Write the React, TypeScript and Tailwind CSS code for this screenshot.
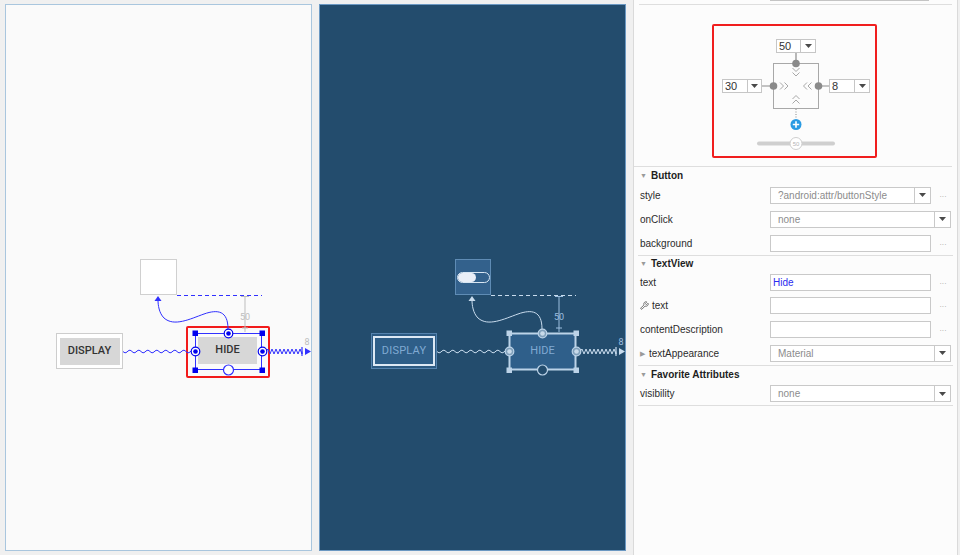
import React from 'react';
import { Wrench } from 'lucide-react';

// small helpers for the connector drawings
const wave = (x1: number, x2: number, y: number, amp: number, period: number) => {
  let d = `M${x1},${y}`;
  for (let x = x1 + 1; x <= x2; x += 1) {
    d += ` L${x},${(y + amp * Math.sin(((x - x1) / period) * 2 * Math.PI)).toFixed(2)}`;
  }
  return d;
};

const zigzag = (x1: number, x2: number, y: number, amp: number, step: number) => {
  let d = `M${x1},${y}`;
  let up = true;
  for (let x = x1 + step; x <= x2; x += step) {
    d += ` L${x},${up ? y - amp : y + amp}`;
    up = !up;
  }
  return d + ` L${x2},${y}`;
};

function DesignCanvas({ blueprint }: { blueprint?: boolean }) {
  const line = blueprint ? '#c9dcee' : '#3030ff';
  const dim = blueprint ? '#9dbfe0' : '#bdbdbd';
  const handle = blueprint ? '#bcd3e8' : '#0000ee';

  return (
    <div
      className={
        blueprint
          ? 'relative w-[307px] h-[547px] border border-[#6b98c2] bg-[#234c6d]'
          : 'relative w-[307px] h-[547px] border border-[#a9c6de] bg-[#fafafa]'
      }
    >
      {/* placeholder / switch widget */}
      {blueprint ? (
        <div className="absolute left-[135px] top-[254px] w-[36px] h-[36px] bg-[#33618c] border border-[#5f8cb5] flex items-center justify-center">
          <div className="w-[33px] h-[11px] rounded-full border border-[#d8e6f3] flex items-center">
            <div className="w-[18px] h-[9px] rounded-full bg-[#e9eef7]" />
          </div>
        </div>
      ) : (
        <div className="absolute left-[134px] top-[254px] w-[37px] h-[36px] bg-white border border-[#d0d0d0]" />
      )}

      {/* DISPLAY button */}
      {blueprint ? (
        <div className="absolute left-[51px] top-[328px] w-[66px] h-[36px] bg-[#2c5a83] border border-[#5583ae] flex items-center justify-center">
          <div className="w-[62px] h-[30px] border-2 border-[#dde9f5] bg-[#2e5e88] flex items-center justify-center font-['Roboto'] text-[11px] text-[#80aad3] tracking-[0.2px]">
            DISPLAY
          </div>
        </div>
      ) : (
        <div className="absolute left-[50px] top-[328px] w-[67px] h-[36px] bg-white border border-[#cdcdcd] flex items-center justify-center">
          <div className="w-[60px] h-[27px] bg-[#d7d7d7] flex items-center justify-center font-['Roboto'] font-medium text-[11px] text-[#333]">
            DISPLAY
          </div>
        </div>
      )}

      {/* HIDE button */}
      {blueprint ? (
        <div className="absolute left-[189px] top-[328px] w-[67px] h-[37px] bg-[#2f5f8a] flex items-center justify-center font-['Roboto'] text-[11px] text-[#80aad3]">
          HIDE
        </div>
      ) : (
        <>
          <div className="absolute left-[192px] top-[332px] w-[59px] h-[27px] bg-[#d7d7d7] flex items-center justify-center font-['Roboto'] font-medium text-[11px] text-[#333]">
            HIDE
          </div>
          <div className="absolute left-[180px] top-[321px] w-[84px] h-[52px] border-2 border-[#f21b1b] rounded-[2px]" />
        </>
      )}

      <svg className="absolute left-0 top-0" width="305" height="545">
        {/* dashed baseline from the top widget */}
        <path d="M171,290.5 H256" stroke={line} strokeWidth="1" strokeDasharray="4 3" fill="none" />
        {/* 50 margin marker */}
        <path d="M235,291.5 H243 M239,291.5 V327 M236,323 H242" stroke={dim} strokeWidth="1" fill="none" />
        <text x="239" y="315" fontSize="9" fill={dim} textAnchor="middle" fontFamily="Roboto, sans-serif">
          50
        </text>
        {/* curved top constraint */}
        <path
          d="M222,324 C222,306 212,304 198,309 C184,314 168,322 158,313 C153,308 152,300 152,295"
          stroke={line}
          strokeWidth="1"
          fill="none"
        />
        <path d="M148.5,296 L152,291 L155.5,296 Z" fill={line} />
        {/* left wave to DISPLAY */}
        <path d={wave(117, 185, 346.5, 1.3, 9)} stroke={line} strokeWidth="1" fill="none" />
        {/* right spring to parent edge */}
        <path d={zigzag(260, 296, 346.5, 2.5, 2)} stroke={line} strokeWidth="1" fill="none" />
        <path d="M296,342 V351" stroke={line} strokeWidth="1.2" />
        <path d="M299,343 L305,346.5 L299,350 Z" fill={line} />
        <text x="301" y="340" fontSize="9" fill={dim} textAnchor="middle" fontFamily="Roboto, sans-serif">
          8
        </text>

        {/* selection frame */}
        <rect
          x="189.5"
          y="328.5"
          width="66"
          height="36"
          fill="none"
          stroke={blueprint ? '#bcd3e8' : '#3030ff'}
          strokeWidth={blueprint ? 2 : 1}
        />
        {[
          [189, 328],
          [256, 328],
          [189, 365],
          [256, 365],
        ].map(([cx, cy]) => (
          <rect key={`${cx}-${cy}`} x={cx - 2.5} y={cy - 2.5} width="5.5" height="5.5" fill={handle} />
        ))}
        {[
          [222.5, 328.5],
          [189.5, 346.5],
          [256.5, 346.5],
        ].map(([cx, cy]) => (
          <g key={`${cx}-${cy}`}>
            <circle cx={cx} cy={cy} r="4.3" fill={blueprint ? '#7f9fba' : 'white'} stroke={handle} strokeWidth="1.2" />
            <circle cx={cx} cy={cy} r="2.3" fill={blueprint ? '#c8daea' : handle} />
          </g>
        ))}
        <circle
          cx="222.5"
          cy="365"
          r="5"
          fill={blueprint ? '#234c6d' : 'white'}
          stroke={blueprint ? '#bcd3e8' : '#3030ff'}
          strokeWidth="1.2"
        />
      </svg>
    </div>
  );
}

function Arrow() {
  return (
    <svg width="7" height="4" viewBox="0 0 7 4">
      <path d="M0,0 H7 L3.5,4 Z" fill="#4a4a4a" />
    </svg>
  );
}

function ConstraintWidget() {
  return (
    <div className="ml-[78px] mt-[19px] w-[165px] h-[134px] border-2 border-[#f01e1e] rounded-[2px] relative">
      <svg className="absolute left-0 top-0" width="161" height="130">
        <path d="M82,27 V37 M47,60 H59 M104,60 H115" stroke="#8a8a8a" strokeWidth="1.2" />
        <rect x="59.5" y="37.5" width="45" height="45" fill="none" stroke="#a8a8a8" />
        <circle cx="82" cy="37.5" r="3.8" fill="#8a8a8a" />
        <circle cx="59.5" cy="60" r="3.8" fill="#8a8a8a" />
        <circle cx="104.5" cy="60" r="3.8" fill="#8a8a8a" />
        <g stroke="#a8a8a8" strokeWidth="1" fill="none">
          <path d="M78.5,42 L82,45.5 L85.5,42 M78.5,46.5 L82,50 L85.5,46.5" />
          <path d="M78.5,73 L82,69.5 L85.5,73 M78.5,77.5 L82,74 L85.5,77.5" />
          <path d="M66,56.5 L69.5,60 L66,63.5 M70.5,56.5 L74,60 L70.5,63.5" />
          <path d="M93,56.5 L89.5,60 L93,63.5 M97.5,56.5 L94,60 L97.5,63.5" />
        </g>
        <path d="M82,83 V93" stroke="#8a8a8a" strokeWidth="1" strokeDasharray="1 1.5" />
        <circle cx="82" cy="98.5" r="5.5" fill="#2a9be3" />
        <path d="M78.8,98.5 H85.2 M82,95.3 V101.7" stroke="white" strokeWidth="1.6" />
        <path d="M45,117.5 H119" stroke="#cfcfcf" strokeWidth="4" strokeLinecap="round" />
        <circle cx="82" cy="117.5" r="6" fill="white" stroke="#cfcfcf" strokeWidth="1" />
        <text x="82" y="119.7" fontSize="6" fill="#b5b5b5" textAnchor="middle" fontFamily="Liberation Sans, sans-serif">
          50
        </text>
      </svg>

      <div className="absolute left-[62px] top-[13px] w-[40px] h-[14px] bg-white border border-[#c6c6c6] flex">
        <div className="w-[23px] pl-[2px] leading-[12px] text-[11px] text-[#333]">50</div>
        <div className="flex-1 border-l border-[#c6c6c6] flex items-center justify-center">
          <Arrow />
        </div>
      </div>
      <div className="absolute left-[8px] top-[53px] w-[40px] h-[14px] bg-white border border-[#c6c6c6] flex">
        <div className="w-[24px] pl-[2px] leading-[12px] text-[11px] text-[#333]">30</div>
        <div className="flex-1 border-l border-[#c6c6c6] flex items-center justify-center">
          <Arrow />
        </div>
      </div>
      <div className="absolute left-[115px] top-[53px] w-[41px] h-[14px] bg-white border border-[#c6c6c6] flex">
        <div className="w-[24px] pl-[2px] leading-[12px] text-[11px] text-[#333]">8</div>
        <div className="flex-1 border-l border-[#c6c6c6] flex items-center justify-center">
          <Arrow />
        </div>
      </div>
    </div>
  );
}

type Prop = {
  label: React.ReactNode;
  value?: string;
  valueClass?: string;
  kind: 'text' | 'combo' | 'select';
};

function PropRow({ p, h }: { p: Prop; h: string }) {
  return (
    <div className={`flex items-center ${h}`}>
      <div className="w-[136px] pl-[6px] text-[#2b2b2b] flex items-center gap-[3px]">{p.label}</div>
      {p.kind === 'select' ? (
        <div className="w-[181px] h-[17px] bg-white border border-[#c9c9c9] flex">
          <div className="flex-1 pl-[7px] leading-[15px] text-[#8c8c8c]">{p.value}</div>
          <div className="w-[16px] border-l border-[#c9c9c9] flex items-center justify-center">
            <Arrow />
          </div>
        </div>
      ) : (
        <>
          <div className="w-[161px] h-[17px] bg-white border border-[#c9c9c9] flex">
            <div className={`flex-1 leading-[15px] ${p.valueClass ?? 'pl-[7px] text-[#8c8c8c]'}`}>{p.value}</div>
            {p.kind === 'combo' && (
              <div className="w-[16px] border-l border-[#c9c9c9] flex items-center justify-center">
                <Arrow />
              </div>
            )}
          </div>
          <div className="w-[24px] text-center text-[7px] text-[#999] leading-none pt-[2px]">···</div>
        </>
      )}
    </div>
  );
}

function SectionHeader({ title, h }: { title: string; h: string }) {
  return (
    <div className={`flex items-center ${h} pl-[6px] gap-[4px]`}>
      <span className="text-[7px] text-[#9a9a9a] leading-none">▼</span>
      <span className="font-bold text-[#1e1e1e]">{title}</span>
    </div>
  );
}

export default function App() {
  return (
    <div className="w-[960px] h-[555px] bg-[#f0f0f0] flex overflow-hidden font-['Liberation_Sans',sans-serif] text-[10px]">
      <div className="ml-[5px] mt-[4px]">
        <DesignCanvas />
      </div>
      <div className="ml-[7px] mt-[4px]">
        <DesignCanvas blueprint />
      </div>

      {/* attributes panel */}
      <div className="ml-[7px] w-[325px] h-[555px] border-x border-[#dadada] bg-[#fcfcfc] flex flex-col">
        <div className="ml-[136px] w-[159px] h-[1px] bg-[#c4c4c4]" />
        <div className="h-[3px]" />
        <div className="mx-[5px] h-[1px] bg-[#dedede]" />
        <div className="h-[161px]">
          <ConstraintWidget />
        </div>

        <div className="mr-[5px] h-[1px] bg-[#dedede]" />
        <SectionHeader title="Button" h="h-[16px]" />
        <PropRow h="h-[24px]" p={{ label: 'style', value: '?android:attr/buttonStyle', kind: 'combo' }} />
        <PropRow h="h-[24px]" p={{ label: 'onClick', value: 'none', kind: 'select' }} />
        <PropRow h="h-[24px]" p={{ label: 'background', kind: 'text' }} />

        <div className="mx-[4px] h-[1px] bg-[#dedede]" />
        <SectionHeader title="TextView" h="h-[15px]" />
        <PropRow h="h-[23px]" p={{ label: 'text', value: 'Hide', valueClass: 'pl-[2px] text-[#2b2bf0]', kind: 'text' }} />
        <PropRow
          h="h-[23px]"
          p={{
            label: (
              <>
                <Wrench size={9} strokeWidth={2.4} className="text-[#666]" />
                <span>text</span>
              </>
            ),
            kind: 'text',
          }}
        />
        <PropRow h="h-[24px]" p={{ label: 'contentDescription', kind: 'text' }} />
        <PropRow
          h="h-[24px]"
          p={{
            label: (
              <>
                <span className="text-[7px] text-[#9a9a9a] leading-none">▶</span>
                <span className="ml-[1px]">textAppearance</span>
              </>
            ),
            value: 'Material',
            kind: 'select',
          }}
        />

        <div className="mx-[4px] h-[1px] bg-[#dedede]" />
        <SectionHeader title="Favorite Attributes" h="h-[16px]" />
        <PropRow h="h-[23px]" p={{ label: 'visibility', value: 'none', kind: 'select' }} />
        <div className="mx-[4px] h-[1px] bg-[#dedede]" />
      </div>
    </div>
  );
}
